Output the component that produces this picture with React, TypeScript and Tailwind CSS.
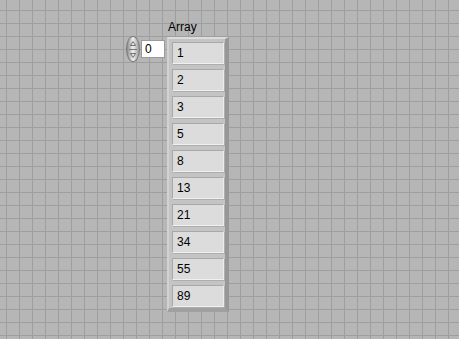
import React from 'react'

const values = [1, 2, 3, 5, 8, 13, 21, 34, 55, 89]

function Spinner() {
  return (
    <div className="w-[14px] h-[26px] rounded-[50%] bg-gradient-to-r from-[#8a8a8a] via-[#f2f2f2] to-[#9a9a9a] border border-[#7c7c7c] flex flex-col items-center justify-center gap-[3px]">
      <svg width="6" height="5" viewBox="0 0 6 5">
        <path d="M3 0.5 L5.5 4.5 L0.5 4.5 Z" fill="none" stroke="#555" strokeWidth="0.8" />
      </svg>
      <div className="w-[8px] h-px bg-[#777]" />
      <svg width="6" height="5" viewBox="0 0 6 5">
        <path d="M3 4.5 L5.5 0.5 L0.5 0.5 Z" fill="none" stroke="#555" strokeWidth="0.8" />
      </svg>
    </div>
  )
}

export default function App() {
  return (
    <div
      className="w-[459px] h-[339px] bg-[#b6b6b6] bg-[linear-gradient(to_right,#9e9e9e_1px,transparent_1px),linear-gradient(to_bottom,#9e9e9e_1px,transparent_1px)] bg-[size:13px_13px] bg-[position:6px_10px] pl-[126px] pt-[20px] font-['Liberation_Sans',Arial,sans-serif] text-[12px] text-black"
    >
      <div className="flex items-start gap-[2px]">
        {/* index display */}
        <div className="flex items-center mt-[16px] gap-px">
          <Spinner />
          <div className="w-[24px] h-[18px] bg-white border border-[#9a9a9a] pl-[3px] leading-[16px]">0</div>
        </div>

        {/* array */}
        <div className="flex flex-col">
          <div className="h-[17px] leading-[14px] pl-px">Array</div>
          <div className="w-[62px] h-[275px] bg-[#c4c4c4] border-t-2 border-l-2 border-r-[4px] border-b-[4px] border-t-[#dcdcdc] border-l-[#d2d2d2] border-r-[#979797] border-b-[#a0a0a0] pl-[3px] pt-[3px] flex flex-col gap-[5px]">
            {values.map((v) => (
              <div
                key={v}
                className="w-[52px] h-[22px] bg-[#dcdcdc] border border-t-[#a8a8a8] border-l-[#a8a8a8] border-r-[#ececec] border-b-[#f0f0f0] shadow-[1px_1px_0_#aeaeae] pl-[4px] leading-[20px]"
              >
                {v}
              </div>
            ))}
          </div>
        </div>
      </div>
    </div>
  )
}
